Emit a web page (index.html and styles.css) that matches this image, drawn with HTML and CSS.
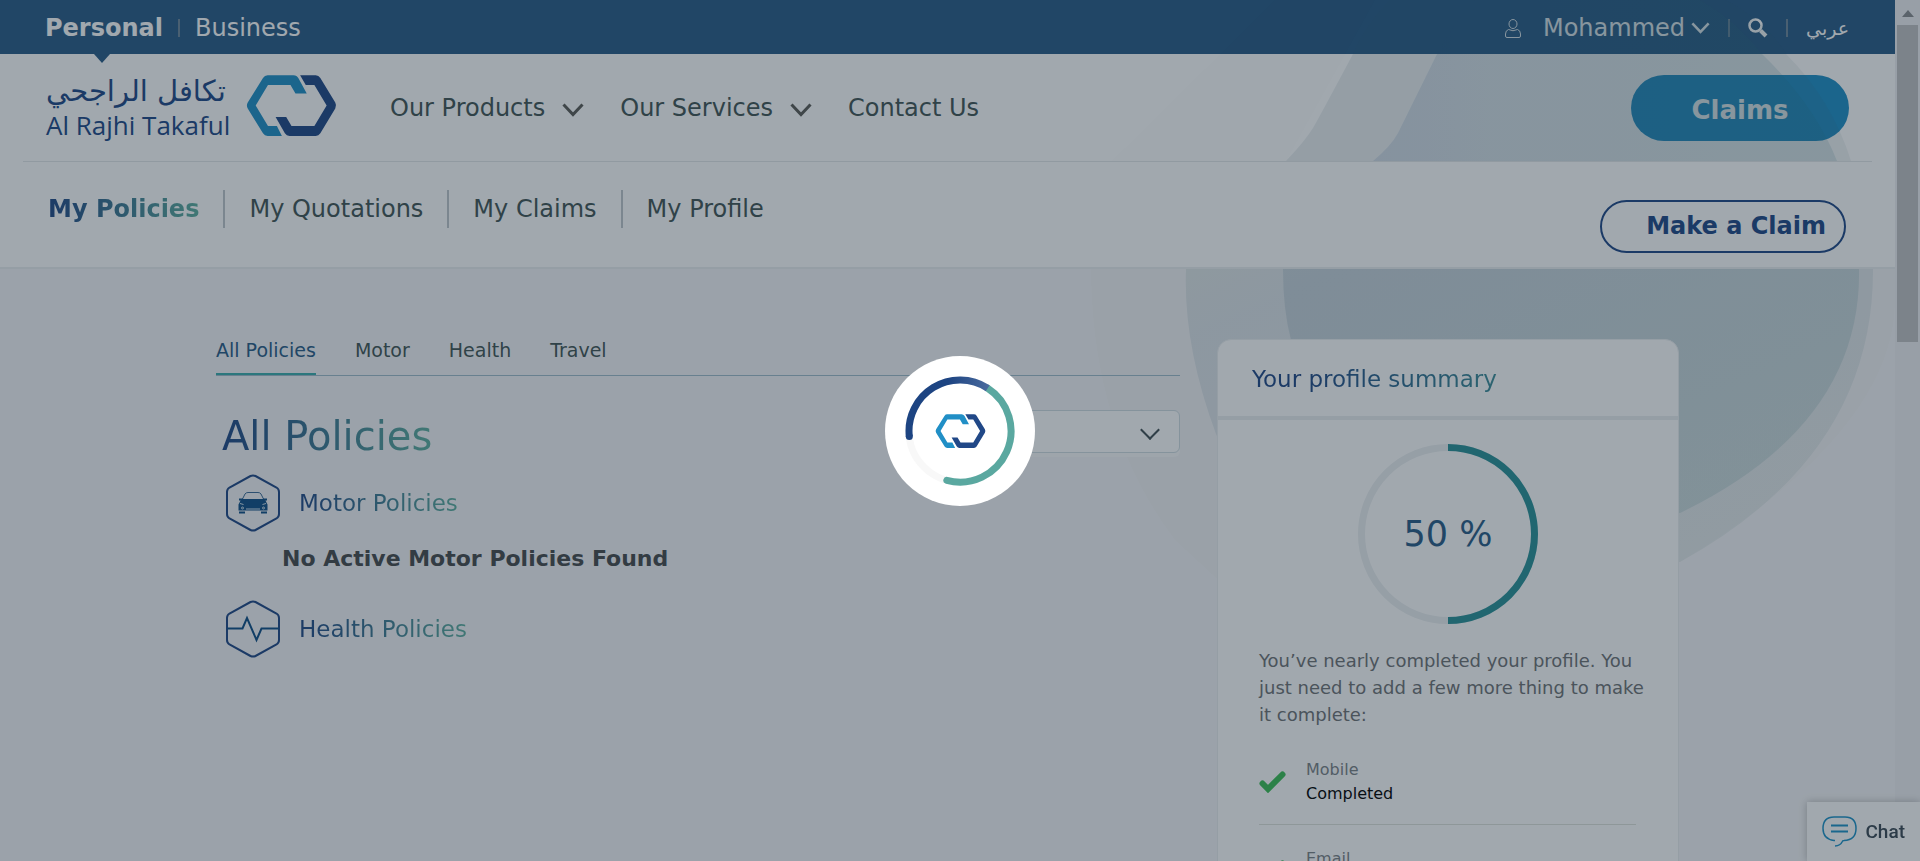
FILE: index.html
```html
<!DOCTYPE html>
<html lang="en">
<head>
<meta charset="utf-8">
<title>My Policies - Al Rajhi Takaful</title>
<link rel="stylesheet" href="styles.css">
</head>
<body>
<svg class="defs" aria-hidden="true">
  <symbol id="mark" viewBox="680 44 272 184">
    <path fill="#218fc6" d="M744 45H822Q832 45 837 54L862 100H828L813 74H745L708 136L745 198H772L787 228H744Q735 228 730 220L684 145Q679 136 684 127L730 53Q735 45 744 45Z"/>
    <path fill="#214887" d="M842 45H889Q898 45 903 53L948 127Q953 136 948 145L903 220Q898 228 889 228H810Q801 228 796 220L768 171H800L816 198H885L922 136L885 74H859Z"/>
  </symbol>
  <symbol id="chevron" viewBox="0 0 22 14">
    <path d="M1.500 1.500L11 11.500L20.500 1.500" fill="none" stroke="currentColor" stroke-width="3"/>
  </symbol>
  <symbol id="tick" viewBox="0 0 27 22">
    <path d="M3.500 12.500L9 18L23.500 3.500" fill="none" stroke="#3cbf55" stroke-width="6" stroke-linecap="round"/>
  </symbol>
</svg>

<div class="page">
  <header class="header">
    <div class="topbar">
      <nav class="segments" aria-label="Segment">
        <a class="segment segment-active" href="#">Personal</a>
        <span class="bar"></span>
        <a class="segment" href="#">Business</a>
      </nav>
      <div class="account">
        <button class="user" type="button">
          <svg class="user-icon" viewBox="0 0 16 19" fill="none" stroke="currentColor"><ellipse cx="8" cy="5" rx="4" ry="4.500"/><path d="M3.500 10.500Q.5 11.500.5 15V17Q.5 18.500 2 18.500H14Q15.500 18.500 15.500 17V15Q15.500 11.500 12.500 10.500Q8 13 3.500 10.500Z"/></svg>
          <span>Mohammed</span>
          <svg class="user-chevron"><use href="#chevron"/></svg>
        </button>
        <span class="bar"></span>
        <button class="search" type="button" aria-label="Search">
          <svg viewBox="0 0 20 20" fill="none" stroke="currentColor"><circle cx="7.500" cy="7.500" r="6" stroke-width="2.500"/><path d="M12.500 12.500L18 18" stroke-width="4"/></svg>
        </button>
        <span class="bar"></span>
        <a class="language" href="#" lang="ar">عربي</a>
      </div>
    </div>
    <div class="mainbar">
      <a class="logo" href="#" aria-label="Al Rajhi Takaful">
        <span class="logo-text">
          <span class="logo-arabic" lang="ar">تكافل الراجحي</span>
          <span class="logo-latin">Al Rajhi Takaful</span>
        </span>
        <svg class="logo-mark"><use href="#mark"/></svg>
      </a>
      <nav class="menu" aria-label="Main">
        <a href="#">Our Products <svg><use href="#chevron"/></svg></a>
        <a href="#">Our Services <svg><use href="#chevron"/></svg></a>
        <a href="#">Contact Us</a>
      </nav>
      <a class="claims" href="#">Claims</a>
    </div>
    <svg class="header-art" viewBox="1055 0 840 161" aria-hidden="true">
      <path fill="#3c786e" fill-opacity=".01" d="M1275 0L1112 161H1286L1375 0Z"/>
      <path fill="#3c6478" fill-opacity=".1" d="M1286 161Q1305 141 1313 128Q1320 116 1353 54Q1365 25 1390 0H1475Q1452 25 1437 54L1398 133Q1391 146 1373 161Z"/>
      <path fill="#3c6478" fill-opacity=".08" d="M1700 0Q1738 22 1762 54Q1815 105 1837 161H1851Q1832 100 1786 54Q1765 20 1725 0Z"/>
      <path fill="url(#tint)" d="M1475 0Q1452 25 1437 54L1398 133Q1391 146 1373 161H1837Q1815 105 1762 54Q1738 22 1700 0Z"/>
      <defs><linearGradient id="tint"><stop offset="0" stop-color="#2b5587" stop-opacity=".21"/><stop offset=".25" stop-color="#2b5f80" stop-opacity=".2"/><stop offset="1" stop-color="#2b6e78" stop-opacity=".2"/></linearGradient></defs>
    </svg>
  </header>

  <div class="subbar">
    <nav class="subnav" aria-label="My account">
      <a href="#" aria-current="page"><span class="fade">My Policies</span></a>
      <a href="#">My Quotations</a>
      <a href="#">My Claims</a>
      <a href="#">My Profile</a>
    </nav>
    <a class="make-claim" href="#">Make a Claim</a>
  </div>

  <main class="main">
    <svg class="main-art" viewBox="1055 269 840 340" aria-hidden="true">
      <path fill="#3c6e78" fill-opacity=".012" d="M1091 269Q1092 430 1175 540L1240 600H1600L1680 562Q1895 430 1895 300V269Z"/>
      <path fill="url(#band)" d="M1186 269Q1183 345 1216 434L1260 530L1680 562Q1874 455 1873 269Z"/>
      <path fill="url(#core)" d="M1283 269Q1283 310 1291 340L1340 513H1680Q1862 425 1859 269Z"/>
      <defs>
        <linearGradient id="band" x2="1" y2="1"><stop offset="0" stop-color="#3c786e" stop-opacity=".11"/><stop offset=".12" stop-color="#2b5f7d" stop-opacity=".11"/><stop offset="1" stop-color="#3c786e" stop-opacity=".08"/></linearGradient>
        <linearGradient id="core" x2="1" y2="1"><stop offset="0" stop-color="#2b5f7d" stop-opacity=".13"/><stop offset=".5" stop-color="#2b6e7d" stop-opacity=".14"/><stop offset="1" stop-color="#2b7d78" stop-opacity=".13"/></linearGradient>
      </defs>
    </svg>

    <section class="policies">
      <nav class="tabs" aria-label="Policy type">
        <a class="tab-active" href="#" aria-current="true">All Policies</a>
        <a href="#">Motor</a>
        <a href="#">Health</a>
        <a href="#">Travel</a>
      </nav>
      <div class="policies-head">
        <h1 class="fade">All Policies</h1>
        <select class="filter" aria-label="Filter policies"><option></option></select>
      </div>
      <section class="group">
        <h2>
          <svg class="group-icon" viewBox="0 0 56 58" fill="none" stroke="#214887" stroke-width="2">
            <path d="M25.500 2Q28 .8 30.500 2L51.500 13.500Q54 15 54 18V40Q54 43 51.500 44.500L30.500 56Q28 57.200 25.500 56L4.500 44.500Q2 43 2 40V18Q2 15 4.500 13.500Z"/>
            <path d="M17.500 25L20 20Q21 18.500 23 18.500H33Q35 18.500 36 20L38.500 25" stroke="#3c6c98" stroke-width="1"/>
            <path fill="#104f88" stroke="none" d="M14 24.500H18V25H38V24.500H42V26.500H40.500L42.500 30.500V36.500H13.500V30.500L15.500 26.500H14ZM14 37.500H20V39.500H14ZM36 37.500H42V39.500H36Z"/>
            <path stroke="#cfe0ea" stroke-width="1" d="M21 35H35M15 29.500L18.500 30.500M41 29.500L37.500 30.500"/>
            <circle cx="17.500" cy="34" r="1" stroke="#cfe0ea" stroke-width="1"/><circle cx="38.500" cy="34" r="1" stroke="#cfe0ea" stroke-width="1"/>
          </svg>
          <span class="fade">Motor Policies</span>
        </h2>
        <p class="empty">No Active Motor Policies Found</p>
      </section>
      <section class="group">
        <h2>
          <svg class="group-icon" viewBox="0 0 56 58" fill="none" stroke="#214887" stroke-width="2">
            <path d="M25.500 2Q28 .8 30.500 2L51.500 13.500Q54 15 54 18V40Q54 43 51.500 44.500L30.500 56Q28 57.200 25.500 56L4.500 44.500Q2 43 2 40V18Q2 15 4.500 13.500Z"/>
            <path stroke="#104f88" d="M2 28.500H17.500L22 18L31.500 40L36.500 28.500H54"/>
          </svg>
          <span class="fade">Health Policies</span>
        </h2>
      </section>
    </section>

    <aside class="profile">
      <header class="profile-head"><h2 class="fade fade-long">Your profile summary</h2></header>
      <div class="profile-body">
        <div class="progress">
          <svg viewBox="0 0 180 180" fill="none" stroke-width="7" aria-hidden="true">
            <circle cx="90" cy="90" r="86.500" stroke="#edf0f2"/>
            <path stroke="#2b9198" d="M90 3.500A86.500 86.500 0 0 1 90 176.500"/>
          </svg>
          <span>50 %</span>
        </div>
        <p class="profile-text">You’ve nearly completed your profile. You just need to add a few more thing to make it complete:</p>
        <ul class="steps">
          <li>
            <svg class="tick"><use href="#tick"/></svg>
            <div><div class="step-name">Mobile</div><div>Completed</div></div>
          </li>
          <li>
            <svg class="tick"><use href="#tick"/></svg>
            <div><div class="step-name">Email</div><div>Completed</div></div>
          </li>
        </ul>
      </div>
    </aside>
  </main>
</div>

<div class="scroll" aria-hidden="true">
  <svg viewBox="0 0 12 7"><path fill="#8a8d90" d="M6 0L12 7H0Z"/></svg>
  <div class="thumb"></div>
</div>

<button class="chat" type="button">
  <svg viewBox="0 0 35 31" fill="none" stroke="#1f93c8" stroke-width="1.500"><path d="M13 24.500H12Q1 23 1 12.500Q1 1 12 1H23Q34 1 34 12.500Q34 24 22 24.500Q20.500 24.500 20 26Q18.500 29.500 13 30"/><path stroke-width="2" d="M9 9.500H26M9 15.500H26"/></svg>
  Chat
</button>

<div class="overlay" role="status" aria-label="Loading">
  <div class="loader">
    <svg class="ring" viewBox="-55 -55 110 110" fill="none" stroke-width="7" stroke-linecap="round">
      <circle r="51" stroke="#f8f8f8"/>
      <path stroke="#5aa8a0" d="M27.700 -42.800A51 51 0 0 1 -13.200 49.300"/>
      <path stroke="url(#arc)" stroke-linecap="butt" d="M-50.700 5.500A51 51 0 0 1 27.700 -42.800"/>
      <circle cx="-50.700" cy="5.500" r="3.500" fill="#1d4482" stroke="none"/>
      <defs><linearGradient id="arc"><stop offset=".5" stop-color="#1d4482"/><stop offset="1" stop-color="#48699d"/></linearGradient></defs>
    </svg>
    <svg class="loader-mark"><use href="#mark"/></svg>
  </div>
</div>
</body>
</html>
```
FILE: styles.css
```css
* { box-sizing: border-box; }

html, body { height: 100%; }

body {
  margin: 0;
  padding-right: 25px;
  overflow: hidden;
  background: #f6f6f8;
  color: #435555;
  font-family: "DejaVu Sans", Verdana, sans-serif;
}

h1, h2, p, ul { margin: 0; padding: 0; font-weight: 400; }
a { color: inherit; text-decoration: none; }
button { border: 0; padding: 0; background: none; color: inherit; font: inherit; }
svg { display: block; flex: none; }
.defs { display: none; }

.fade {
  background: linear-gradient(90deg, #214887, #5fafa0);
  background-clip: text;
  -webkit-background-clip: text;
  color: transparent;
}
.fade-long { background-image: linear-gradient(90deg, #214887 20%, #3f8f9a); }

/* Header */
.header { position: relative; }
.header-art {
  position: absolute;
  top: 0;
  right: 0;
  width: 840px;
  height: 161px;
  pointer-events: none;
}

.topbar {
  display: flex;
  justify-content: space-between;
  align-items: center;
  height: 54px;
  padding: 2px 46px 0 45px;
  background: #2a5c87;
  color: #fff;
  font-size: 24px;
}
.segments, .account { display: flex; align-items: center; height: 100%; }
.account { gap: 18px; }
.segments { gap: 15px; }
.segment { display: flex; align-items: center; height: 100%; }
.segment-active { position: relative; font-weight: 700; }
.segment-active::after {
  content: "";
  position: absolute;
  top: 100%;
  left: 50%;
  margin-left: -10px;
  border: 8px solid transparent;
  border-top: 9px solid #2a5c87;
  border-bottom: 0;
}
.bar { width: 2px; height: 18px; background: #6f879c; }
.user { display: flex; align-items: center; }
.user-icon { width: 16px; height: 19px; margin-right: 22px; }
.user-chevron { width: 19px; height: 12px; margin-left: 6px; }
.search svg { width: 20px; height: 20px; }
.language { font-size: 19px; }

.mainbar {
  display: flex;
  align-items: center;
  height: 108px;
  padding: 0 46px;
  background:
    linear-gradient(#e4e8ea, #e4e8ea) center bottom / calc(100% - 46px) 1px no-repeat,
    #fff;
}
.logo { display: flex; align-items: center; color: #214887; }
.logo-text { display: flex; flex-direction: column; width: 183px; }
.logo-arabic { font-size: 29px; line-height: 35px; white-space: nowrap; }
.logo-latin { font-family: "Open Sans", sans-serif; font-size: 26px; line-height: 33px; white-space: nowrap; }
.logo-mark { width: 91px; height: 61px; margin-left: 17px; margin-bottom: 5px; }
.menu { display: flex; gap: 36px; margin-left: 53px; font-size: 24px; }
.menu a { display: flex; align-items: center; gap: 17px; }
.menu svg { width: 22px; height: 14px; margin-top: 4px; color: #5c5c58; }
.claims {
  width: 218px;
  margin-left: auto;
  padding: 4px 0 0;
  border-radius: 33px;
  background: #218fc6;
  color: #fff;
  font-size: 26px;
  font-weight: 700;
  line-height: 62px;
  text-align: center;
}

/* Account navigation */
.subbar {
  display: flex;
  justify-content: space-between;
  align-items: flex-start;
  height: 107px;
  padding: 28px 49px 0 48px;
  border-bottom: 2px solid #ebeef0;
  background: #fff;
  font-size: 24px;
}
.subnav { display: flex; line-height: 38px; }
.subnav a + a { margin-left: 24px; padding-left: 24px; border-left: 2px solid #c0c6cc; }
.subnav [aria-current] { font-weight: 700; }
.make-claim {
  margin-top: 10px;
  padding: 0 18px 0 44px;
  border: 2px solid #214887;
  border-radius: 27px;
  color: #214887;
  font-weight: 700;
  line-height: 49px;
}

/* Content */
.main {
  position: relative;
  display: grid;
  grid-template-columns: minmax(0, 1fr) 462px;
  gap: 37px;
  padding: 70px 216px 40px;
}
.main-art { position: absolute; top: 0; right: 0; width: 840px; height: 340px; }
.policies, .profile { position: relative; }

.tabs {
  display: flex;
  gap: 39px;
  border-bottom: 1px solid #a0bccc;
  font-size: 19px;
  line-height: 22px;
}
.tabs a { padding-bottom: 12px; border-bottom: 2px solid transparent; }
.tabs .tab-active { border-color: #3caeae; color: #2a5c87; }

.policies-head {
  position: relative;
  display: flex;
  justify-content: space-between;
  align-items: flex-start;
  margin: 34px 0 12px;
}
.policies-head h1 { margin-left: 6px; font-size: 40px; line-height: 52px; }
.filter {
  appearance: none;
  width: 260px;
  height: 43px;
  padding: 0 16px;
  border: 1px solid #d0dce2;
  border-radius: 6px;
  background: #fff;
  box-shadow: 0 4px 0 #fafafb;
  font: inherit;
}
.policies-head::after {
  content: "";
  position: absolute;
  top: 13px;
  right: 23px;
  width: 12px;
  height: 12px;
  border: solid #435055;
  border-width: 0 2px 2px 0;
  transform: rotate(45deg);
  pointer-events: none;
}
.group { margin-bottom: 28px; }
.group h2 { display: flex; align-items: center; gap: 18px; margin-left: 9px; font-size: 23px; }
.group-icon { width: 56px; height: 58px; }
.empty { margin: 14px 0 0 66px; color: #494b4e; font-size: 22px; font-weight: 700; line-height: 26px; }

/* Profile card */
.profile {
  border: 1px solid #eceff1;
  border-radius: 14px 14px 0 0;
  background: #fff;
}
.profile-head { padding: 24px 34px 22px; border-bottom: 4px solid #eceff1; }
.profile-head h2 { width: fit-content; font-size: 23px; line-height: 30px; }
.profile-body { padding: 24px 30px 40px 41px; }
.progress {
  display: grid;
  place-items: center;
  width: 180px;
  height: 180px;
  margin: 0 auto 23px 99px;
  color: #2a5c87;
  font-size: 35px;
}
.progress > * { grid-area: 1 / 1; }
.progress svg { width: 100%; height: 100%; }
.profile-text { color: #707376; font-size: 18px; line-height: 27px; }
.steps { margin: 8px 12px 0 0; list-style: none; color: #000; font-size: 16px; line-height: 24px; }
.steps li { display: flex; align-items: center; gap: 20px; padding: 22px 0 18px; border-bottom: 1px solid #dfe3dc; }
.step-name { color: #7c8286; }
.tick { width: 27px; height: 22px; }

/* Window furniture */
.scroll {
  position: fixed;
  top: 0;
  right: 0;
  bottom: 0;
  width: 25px;
  padding: 0 2px;
  background: #f1f1f4;
}
.scroll svg { width: 12px; height: 7px; margin: 10px auto 8px; }
.thumb { height: 317px; background: #c1c1c4; }

.chat {
  position: fixed;
  right: 0;
  bottom: 0;
  display: flex;
  align-items: center;
  gap: 8px;
  height: 59px;
  padding: 0 15px;
  background: #fff;
  box-shadow: 0 0 8px rgba(0, 0, 0, .25);
  color: #3c4a55;
  font: 500 19px Roboto, sans-serif;
}
.chat svg { width: 35px; height: 31px; }

.overlay {
  position: fixed;
  inset: 0;
  display: grid;
  place-items: center;
  background: rgba(20, 38, 52, .4);
}
.loader {
  display: grid;
  place-items: center;
  width: 150px;
  height: 150px;
  border-radius: 50%;
  background: #fff;
}
.loader > * { grid-area: 1 / 1; }
.ring { width: 110px; height: 110px; }
.loader-mark { width: 51px; height: 34px; }
```
